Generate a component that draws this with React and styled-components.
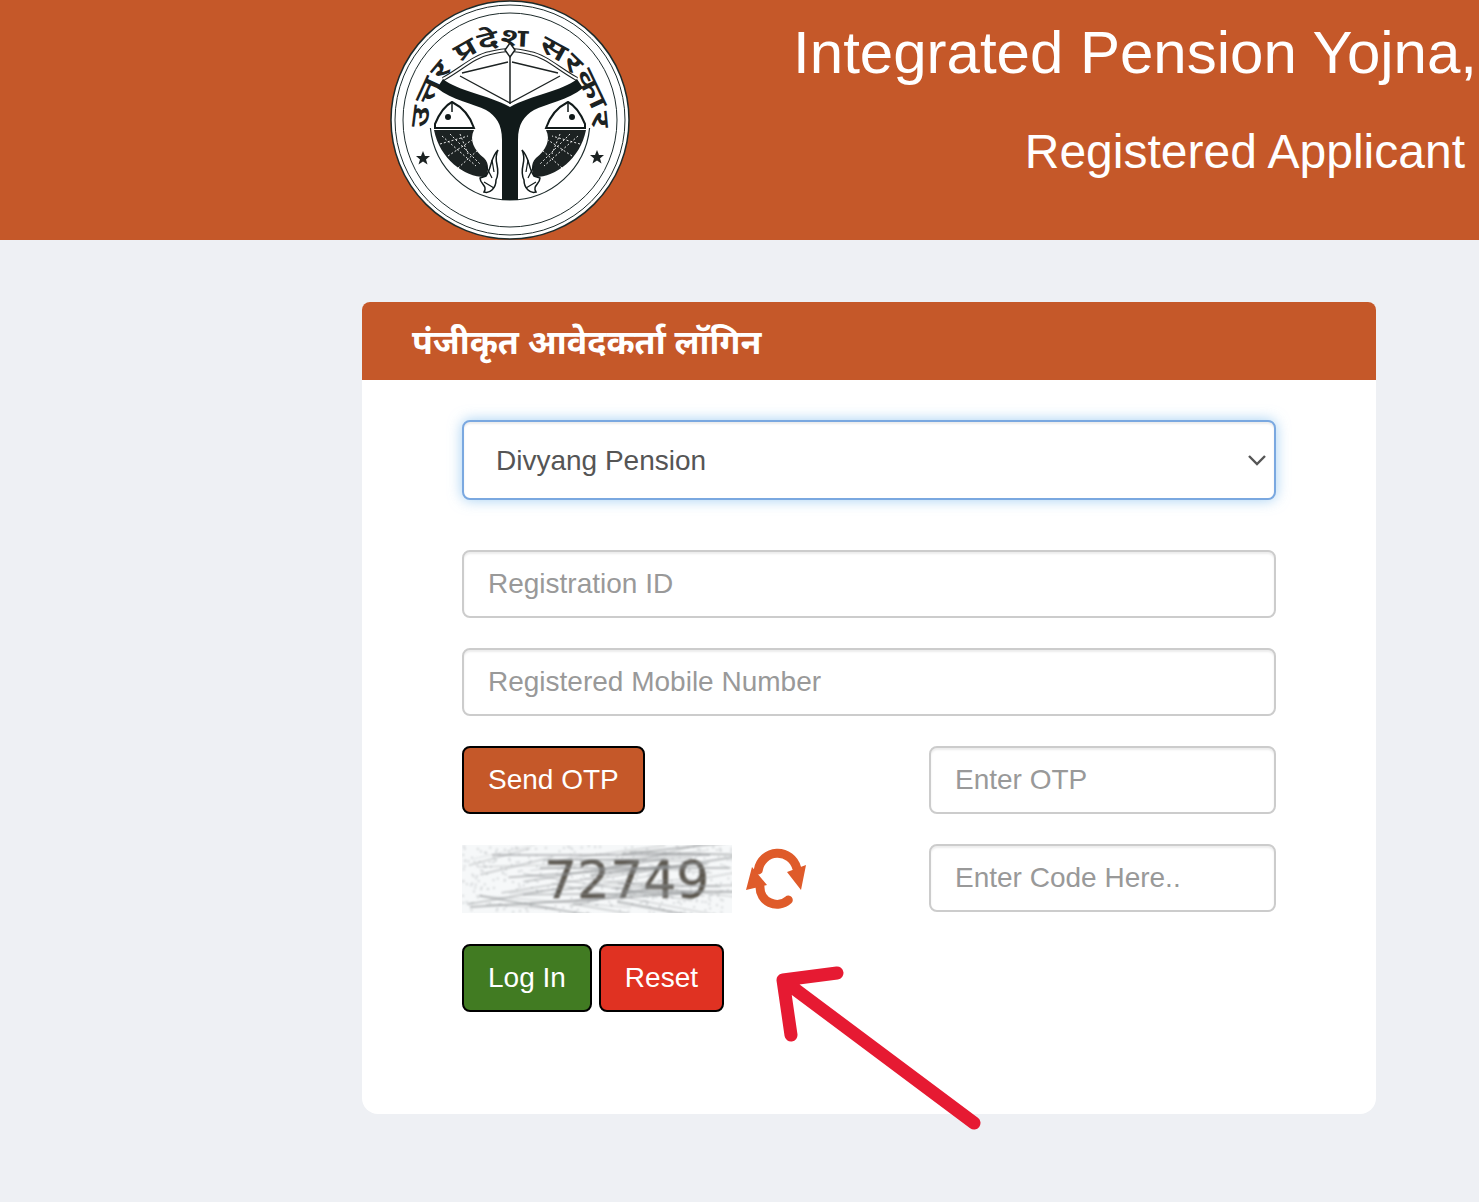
import React from "react";
import styled, { createGlobalStyle } from "styled-components";

const rust = "#c55829";

const chevron =
  "data:image/svg+xml,%3Csvg xmlns='http://www.w3.org/2000/svg' width='20' height='12' viewBox='0 0 20 12'%3E%3Cpath d='M2 2 L10 10 L18 2' fill='none' stroke='%23555' stroke-width='2.4'/%3E%3C/svg%3E";

const Global = createGlobalStyle`
  html, body { margin: 0; padding: 0; background: #eef0f4; }
  body { font-family: "Liberation Sans", Arial, sans-serif; overflow: hidden; }
  * { box-sizing: border-box; }
`;

const Page = styled.div`
  width: 1479px;
  height: 1202px;
  overflow: hidden;
`;

const Banner = styled.header`
  height: 240px;
  padding: 0 2px 0 390px;
  background: ${rust};
  display: flex;
  justify-content: space-between;
  overflow: hidden;
  color: #fff;
`;

const Titles = styled.div`
  display: flex;
  flex-direction: column;
  align-items: flex-end;
`;

const MainTitle = styled.h1`
  margin: 18px 0 0;
  font-size: 60px;
  line-height: 69px;
  font-weight: 400;
  white-space: nowrap;
`;

const SubTitle = styled.h2`
  margin: 37px 12px 0 0;
  font-size: 48px;
  line-height: 55px;
  font-weight: 400;
  white-space: nowrap;
`;

const Card = styled.section`
  position: relative;
  width: 1014px;
  height: 812px;
  margin: 62px 0 0 362px;
  background: #fff;
  border-radius: 8px 8px 16px 16px;
`;

const CardHead = styled.div`
  height: 78px;
  padding: 9px 50px 0;
  display: flex;
  align-items: center;
  background: ${rust};
  border-radius: 8px 8px 0 0;
  color: #fff;
`;

const CardTitle = styled.h3`
  margin: 0;
  font-size: 34px;
  font-weight: 700;
  font-family: "Noto Sans Devanagari", "Lohit Devanagari", "Noto Sans", "Liberation Sans", sans-serif;
`;

const Form = styled.form`
  margin: 40px 100px 0;
  display: flex;
  flex-direction: column;
  gap: 30px;
`;

const Select = styled.select`
  appearance: none;
  height: 80px;
  width: 100%;
  margin-bottom: 20px;
  padding: 0 40px 0 32px;
  border: 2px solid #7aa8e0;
  border-radius: 8px;
  background: #fff url("${chevron}") no-repeat right 7px center;
  color: #555;
  font: 28px "Liberation Sans", Arial, sans-serif;
  box-shadow: inset 0 2px 2px rgba(0, 0, 0, 0.075), 0 0 14px rgba(102, 175, 233, 0.6);
  outline: none;
`;

const Input = styled.input`
  display: block;
  width: ${(p) => p.$width || "100%"};
  height: 68px;
  padding: 0 24px;
  border: 2px solid #ccc;
  border-radius: 8px;
  background: #fff;
  font: 28px "Liberation Sans", Arial, sans-serif;
  box-shadow: inset 0 2px 2px rgba(0, 0, 0, 0.075);
  outline: none;
  &::placeholder { color: #999; opacity: 1; }
`;

const Row = styled.div`
  display: flex;
  justify-content: space-between;
  align-items: center;
  height: 68px;
`;

const Actions = styled.div`
  display: flex;
  gap: 7px;
  margin-top: 2px;
`;

const Button = styled.button`
  height: 68px;
  padding: 0 24px;
  border: 2px solid #000;
  border-radius: 8px;
  background: ${(p) => p.$bg};
  color: #fff;
  font: 28px "Liberation Sans", Arial, sans-serif;
`;

const CaptchaGroup = styled.div`
  display: flex;
  align-items: center;
  gap: 14px;
  margin-top: 1px;
`;

const Drawing = styled.svg`
  display: block;
  flex: none;
`;

const ArrowMark = styled.svg`
  position: absolute;
  left: 410px;
  top: 660px;
`;

function Seal() {
  const fish = (
    <g>
      <path d="M45 124 C50 112 56 105 62 102 C72 107 80 116 84 128 L45 128Z" fill="#fff" stroke="#111a1a" strokeWidth="2" />
      <circle cx="58" cy="117" r="3" fill="#111a1a" />
      <path d="M62 102 L62 112" stroke="#111a1a" strokeWidth="1.5" />
      <path d="M44 130 L84 130 C79 140 84 150 94 158 C100 164 98 172 96 177 C76 178 50 160 44 130Z" fill="#1c2222" />
      <path d="M52 136 L86 166 M60 134 L90 164 M70 134 L78 154 M50 144 L78 136 M58 156 L82 140 M68 168 L88 150" stroke="#fff" strokeWidth="0.9" strokeDasharray="2 2" />
      <path d="M96 176 C102 168 100 158 108 150 C102 162 112 168 106 180 C106 188 100 194 94 192 C98 186 90 184 90 178Z" fill="#fff" stroke="#111a1a" strokeWidth="1.5" />
      <path d="M96 166 L102 178 M102 160 L104 172 M94 182 L104 188" stroke="#111a1a" strokeWidth="1.2" />
    </g>
  );
  const star = "M0 -7 L2 -2 L7 -2 L3 1.500 L4.500 6.500 L0 3.500 L-4.500 6.500 L-3 1.500 L-7 -2 L-2 -2Z";
  return (
    <Drawing width="240" height="240" viewBox="0 0 240 240">
      <circle cx="120" cy="120" r="119" fill="#fff" stroke="#1c2a2a" strokeWidth="1.5" />
      <circle cx="120" cy="120" r="115" fill="none" stroke="#1c2a2a" strokeWidth="1" />
      <circle cx="120" cy="120" r="107" fill="none" stroke="#1c2a2a" strokeWidth="1" />
      <path d="M40.400 128 A80 80 0 0 0 199.600 128" fill="none" stroke="#1c2a2a" strokeWidth="1.2" />
      <path id="sealArc" d="M38 128 A82 82 0 1 1 202 128" fill="none" />
      <text fontFamily="'Noto Sans Devanagari','Lohit Devanagari','Noto Sans',sans-serif" fontSize="25" fontWeight="600" fill="#1c2222" textAnchor="middle">
        <textPath href="#sealArc" startOffset="50%" textLength="258" lengthAdjust="spacingAndGlyphs">उत्तर प्रदेश सरकार</textPath>
      </text>
      <path d="M53 79 C70 70 84 56 100 53 C108 51 114 50 120 50 C126 50 132 51 140 53 C156 56 170 70 187 79" fill="none" stroke="#1c2222" strokeWidth="4" />
      <path d="M53 79 C70 70 84 56 100 53 C108 51 114 50 120 50 C126 50 132 51 140 53 C156 56 170 70 187 79" fill="none" stroke="#fff" strokeWidth="2" />
      <path d="M72 73 L118 62 M168 73 L122 62 M70 76 L120 103 L170 76" fill="none" stroke="#1c2222" strokeWidth="1.3" />
      <path d="M120 43 L125 50 L120 57 L115 50Z" fill="#fff" stroke="#1c2222" strokeWidth="1.5" />
      <path d="M120 57 L120 104" stroke="#1c2222" strokeWidth="1.5" />
      <path d="M53 79 C68 91 98 95 120 107 C142 95 172 91 187 79 L193 88 C178 100 156 104 144 110 C134 116 128 124 128 140 L128 200 L112 200 L112 140 C112 124 106 116 96 110 C84 104 62 100 47 88Z" fill="#111a1a" />
      {fish}
      <g transform="translate(240 0) scale(-1 1)">{fish}</g>
      <path d={star} transform="translate(33 158)" fill="#1c2222" />
      <path d={star} transform="translate(207 157)" fill="#1c2222" />
    </Drawing>
  );
}

// fixed pseudo random scratches for the captcha picture
function scratches() {
  let seed = 7;
  const next = () => {
    seed = (seed * 16807) % 2147483647;
    return seed / 2147483647;
  };
  const lines = [];
  for (let i = 0; i < 38; i++) {
    const x = 5 + next() * 170;
    const y = 6 + next() * 58;
    const len = 50 + next() * 150;
    const tilt = -0.28 + next() * 0.5;
    lines.push([x, y, x + len, y + len * tilt, 0.8 + next() * 1.4, 0.25 + next() * 0.4]);
  }
  const dots = [];
  for (let i = 0; i < 420; i++) dots.push([next() * 270, next() * 68]);
  return { lines, dots };
}

const noise = scratches();

function Captcha() {
  return (
    <Drawing width="270" height="68" viewBox="0 0 270 68">
      <defs>
        <filter id="soft">
          <feGaussianBlur stdDeviation="0.8" />
        </filter>
      </defs>
      <rect width="270" height="68" fill="#f6f8f9" />
      <g filter="url(#soft)">
        {noise.dots.map((d, i) => (
          <rect key={i} x={d[0]} y={d[1]} width="2" height="2" fill="#d4d7d9" />
        ))}
        <text x="82" y="53" fontFamily="'DejaVu Sans',sans-serif" fontSize="52" fill="#5b564e" stroke="#5b564e" strokeWidth="0.4">72749</text>
        <line x1="30" y1="10" x2="248" y2="10" stroke="#9a9c9e" strokeWidth="2.2" opacity="0.6" />
        <line x1="8" y1="62" x2="230" y2="48" stroke="#8d9092" strokeWidth="1.8" opacity="0.6" />
        {noise.lines.map((l, i) => (
          <line key={i} x1={l[0]} y1={l[1]} x2={l[2]} y2={l[3]} stroke="#8d9092" strokeWidth={l[4]} opacity={l[5]} />
        ))}
      </g>
    </Drawing>
  );
}

function RefreshIcon() {
  return (
    <Drawing width="62" height="62" viewBox="0 0 62 62">
      <path d="M12.300 22 A19.600 19.600 0 0 1 50.700 20 M42.300 52 A17 17 0 0 1 14 38.700" fill="none" stroke="#df5b2a" strokeWidth="9" strokeLinecap="round" />
      <path d="M41 24 L60 17 L55 42Z M0 42 L6 19 L21 37Z" fill="#df5b2a" />
    </Drawing>
  );
}

function Arrow() {
  return (
    <ArrowMark width="220" height="175" viewBox="0 0 220 175">
      <path d="M202 161 L12 19 M65 11 L11 18 L19 73" fill="none" stroke="#e61a32" strokeWidth="13" strokeLinecap="round" strokeLinejoin="round" />
    </ArrowMark>
  );
}

export default function App() {
  return (
    <Page>
      <Global />
      <Banner>
        <Seal />
        <Titles>
          <MainTitle>Integrated Pension Yojna,</MainTitle>
          <SubTitle>Registered Applicant</SubTitle>
        </Titles>
      </Banner>
      <Card>
        <CardHead>
          <CardTitle>पंजीकृत आवेदकर्ता लॉगिन</CardTitle>
        </CardHead>
        <Form>
          <Select defaultValue="divyang">
            <option value="divyang">Divyang Pension</option>
          </Select>
          <Input placeholder="Registration ID" />
          <Input placeholder="Registered Mobile Number" />
          <Row>
            <Button type="button" $bg={rust}>Send OTP</Button>
            <Input $width="347px" placeholder="Enter OTP" />
          </Row>
          <Row>
            <CaptchaGroup>
              <Captcha />
              <RefreshIcon />
            </CaptchaGroup>
            <Input $width="347px" placeholder="Enter Code Here.." />
          </Row>
          <Actions>
            <Button type="button" $bg="#417b22">Log In</Button>
            <Button type="button" $bg="#e03222">Reset</Button>
          </Actions>
        </Form>
        <Arrow />
      </Card>
    </Page>
  );
}
